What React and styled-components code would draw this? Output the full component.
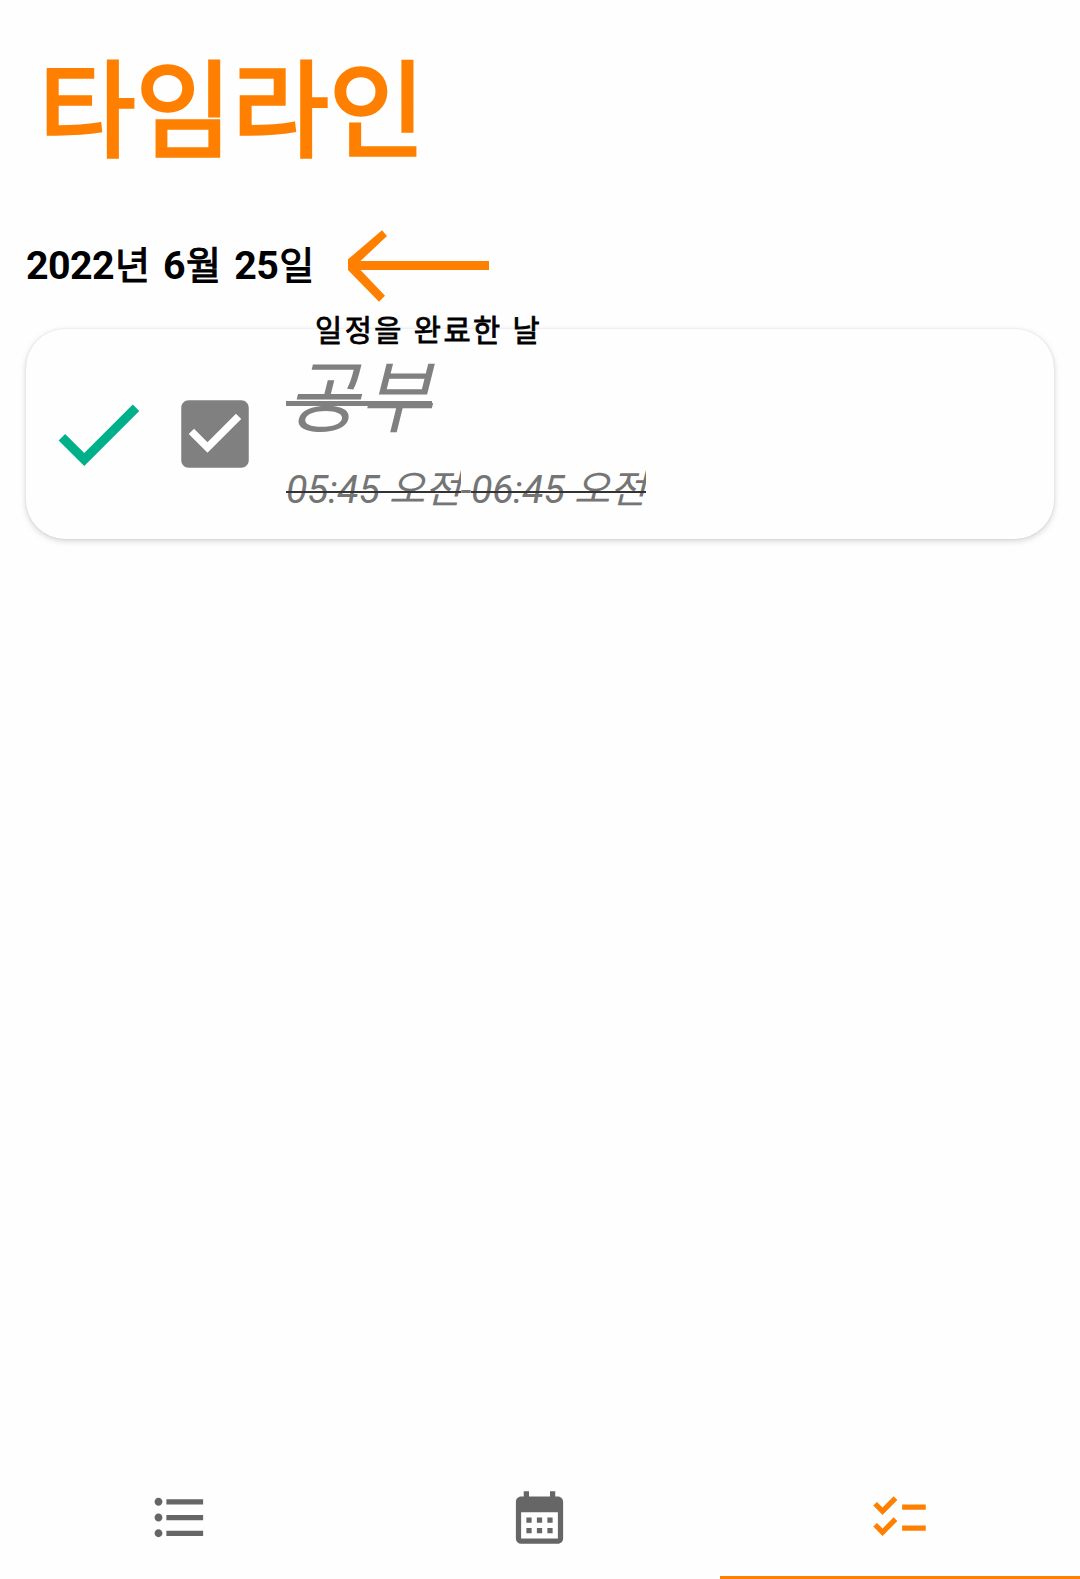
import React from "react";
import styled, { createGlobalStyle } from "styled-components";

const GlobalStyle = createGlobalStyle`
  * { box-sizing: border-box; }
  body { margin: 0; background: #fefefe; }
`;

const Screen = styled.div`
  display: flex;
  flex-direction: column;
  width: 1080px;
  height: 1579px;
  overflow: hidden;
  background: #fefefe;
  color: #000;
  font-family: Roboto, "Noto Sans CJK KR", sans-serif;
`;

const Title = styled.h1`
  margin: 0;
  padding: 37px 0 0 39px;
  height: 223px;
  font-size: 105px;
  line-height: 152px;
  font-weight: 400;
  color: #ff8000;
  -webkit-text-stroke: 3.3px #ff8000;
`;

const DateRow = styled.div`
  display: flex;
  align-items: center;
  height: 84px;
  padding-left: 26px;
`;

const DateText = styled.h2`
  margin: 0;
  padding-top: 2px;
  width: 322px;
  font-size: 39.375px;
  line-height: 58px;
  font-weight: 700;
  letter-spacing: -0.6px;
  word-spacing: 4px;
  white-space: nowrap;
`;

const Hangul = styled.span`
  margin-left: 1px;
  font-size: 38px;
  font-weight: 400;
  letter-spacing: 0;
  -webkit-text-stroke: 1.1px currentColor;
`;

const Arrow = styled.svg`
  display: block;
  width: 142px;
  height: 78px;
`;

const CardArea = styled.section`
  position: relative;
  padding: 22px 26px 0;
`;

const Caption = styled.div`
  position: absolute;
  left: 315px;
  top: 2px;
  font-size: 29.5px;
  line-height: 44px;
  letter-spacing: 2.5px;
  white-space: nowrap;
  -webkit-text-stroke: 0.8px #000;
`;

const Card = styled.article`
  display: flex;
  align-items: center;
  height: 210px;
  padding-left: 17px;
  border-radius: 39px;
  background: #fefefe;
  box-shadow: 0 2px 6px rgba(0, 0, 0, 0.17), 0 0 2px rgba(0, 0, 0, 0.1);
`;

const Icon = styled.svg`
  display: block;
  flex: none;
  width: ${(p) => p.$size}px;
  height: ${(p) => p.$size}px;
  fill: ${(p) => p.$color};
`;

const CheckBox = styled(Icon)`
  margin-left: 17px;
`;

const Details = styled.div`
  display: flex;
  flex-direction: column;
  align-self: flex-start;
  align-items: flex-start;
  margin-left: 26px;
  padding-top: 13px;
`;

const Struck = styled.span`
  position: relative;
  font-style: italic;

  &::after {
    content: "";
    position: absolute;
    left: 0;
    right: 0;
    top: ${(p) => p.$top}px;
    height: ${(p) => p.$thickness}px;
    background: ${(p) => p.$line};
  }
`;

const TaskName = styled(Struck)`
  height: 119px;
  font-size: 78.75px;
  line-height: 114px;
  letter-spacing: 0.6px;
  color: #808080;
`;

const TimeRange = styled.div`
  display: flex;
  font-size: 39.375px;
  line-height: 57px;
  letter-spacing: -0.35px;
  color: #757575;
`;

const Time = styled(Struck)`
  overflow: hidden;
`;

const TabBar = styled.nav`
  display: grid;
  grid-template-columns: repeat(3, 1fr);
  height: 123px;
  margin-top: auto;
`;

const Tab = styled.div`
  display: flex;
  align-items: center;
  justify-content: center;
  padding: 2px 1px 0 0;
  border-bottom: 3px solid ${(p) => (p.$active ? "#ff8000" : "transparent")};
`;

const tabs = [
  {
    name: "list",
    path: "M4 10.5c-.83 0-1.5.67-1.5 1.5s.67 1.5 1.5 1.5 1.5-.67 1.5-1.5-.67-1.5-1.5-1.5zm0-6c-.83 0-1.5.67-1.5 1.5S3.17 7.5 4 7.5 5.5 6.83 5.5 6 4.83 4.5 4 4.5zm0 12c-.83 0-1.5.68-1.5 1.5s.68 1.5 1.5 1.5 1.5-.68 1.5-1.5-.67-1.5-1.5-1.5zM7 19h14v-2H7v2zm0-6h14v-2H7v2zm0-8v2h14V5H7z",
  },
  {
    name: "calendar",
    path: "M19 4h-1V2h-2v2H8V2H6v2H5c-1.11 0-1.99.9-1.99 2L3 20a2 2 0 0 0 2 2h14c1.1 0 2-.9 2-2V6c0-1.1-.9-2-2-2zm0 16H5V10h14v10zM9 14H7v-2h2v2zm4 0h-2v-2h2v2zm4 0h-2v-2h2v2zm-8 4H7v-2h2v2zm4 0h-2v-2h2v2zm4 0h-2v-2h2v2z",
  },
  {
    name: "timeline",
    active: true,
    path: "M22 7h-9v2h9V7zm0 8h-9v2h9v-2zM5.54 11L2 7.46l1.41-1.41 2.12 2.12 4.24-4.24 1.41 1.41L5.54 11zm0 8L2 15.46l1.41-1.41 2.12 2.12 4.24-4.24 1.41 1.41L5.54 19z",
  },
];

const timeStrike = { $top: 30, $thickness: 2, $line: "#333" };

export default function App() {
  return (
    <Screen>
      <GlobalStyle />
      <Title>타임라인</Title>
      <DateRow>
        <DateText>
          2022<Hangul>년</Hangul> 6<Hangul>월</Hangul> 25<Hangul>일</Hangul>
        </DateText>
        <Arrow viewBox="0 0 142 78">
          <path
            fill="#ff8000"
            d="M0 33.300L34 4.300l5 5.700L12.500 35H141v9H12.500L37 69.700l-6 6L0 44z"
          />
        </Arrow>
      </DateRow>
      <CardArea>
        <Card>
          <Icon viewBox="0 0 24 24" $size={110} $color="#00b08b">
            <path d="M9 16.170L4.830 12l-1.420 1.410L9 19 21 7l-1.410-1.410z" />
          </Icon>
          <CheckBox viewBox="0 0 24 24" $size={90} $color="#808080">
            <path d="M19 3H5c-1.110 0-2 .9-2 2v14c0 1.100.89 2 2 2h14c1.110 0 2-.9 2-2V5c0-1.100-.89-2-2-2zm-9 14l-5-5 1.410-1.410L10 14.170l7.590-7.590L19 8l-9 9z" />
          </CheckBox>
          <Details>
            <TaskName $top={59} $thickness={5} $line="#808080">
              공부
            </TaskName>
            <TimeRange>
              <Time {...timeStrike}>05:45 오전</Time>
              <span>-</span>
              <Time {...timeStrike}>06:45 오전</Time>
            </TimeRange>
          </Details>
        </Card>
        <Caption>일정을 완료한 날</Caption>
      </CardArea>
      <TabBar>
        {tabs.map((tab) => (
          <Tab key={tab.name} $active={tab.active}>
            <Icon
              viewBox="0 0 24 24"
              $size={63}
              $color={tab.active ? "#ff8000" : "#666"}
            >
              <path d={tab.path} />
            </Icon>
          </Tab>
        ))}
      </TabBar>
    </Screen>
  );
}
